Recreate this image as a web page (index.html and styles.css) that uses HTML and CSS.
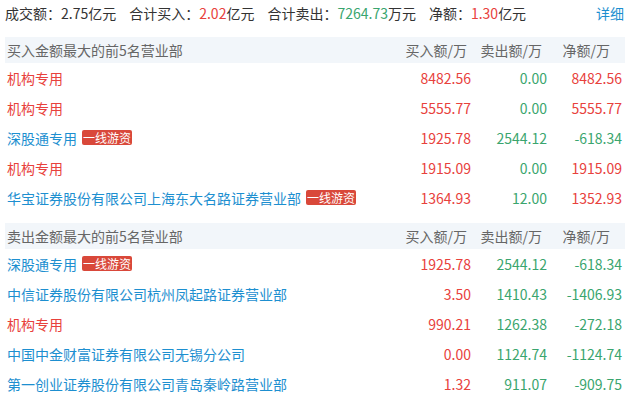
FILE: index.html
```html
<!DOCTYPE html>
<html lang="zh-CN">
<head>
    <meta charset="UTF-8">
    <title>龙虎榜营业部</title>
    <link rel="stylesheet" href="styles.css">
</head>
<body>
    <div class="panel">
        <div class="summary">
            <span class="item">成交额：2.75亿元</span>
            <span class="item">合计买入：<em class="up">2.02</em>亿元</span>
            <span class="item">合计卖出：<em class="down">7264.73</em>万元</span>
            <span class="item">净额：<em class="up">1.30</em>亿元</span>
            <a class="more" href="#">详细</a>
        </div>

        <div class="table">
            <div class="head">
                <span class="name">买入金额最大的前5名营业部</span>
                <span class="col c-buy">买入额/万</span>
                <span class="col c-sell">卖出额/万</span>
                <span class="col c-net">净额/万</span>
            </div>
            <div class="row">
                <span class="name org">机构专用</span>
                <span class="num up">8482.56</span>
                <span class="num down">0.00</span>
                <span class="num up">8482.56</span>
            </div>
            <div class="row">
                <span class="name org">机构专用</span>
                <span class="num up">5555.77</span>
                <span class="num down">0.00</span>
                <span class="num up">5555.77</span>
            </div>
            <div class="row">
                <span class="name"><a href="#">深股通专用</a><i class="tag">一线游资</i></span>
                <span class="num up">1925.78</span>
                <span class="num down">2544.12</span>
                <span class="num down">-618.34</span>
            </div>
            <div class="row">
                <span class="name org">机构专用</span>
                <span class="num up">1915.09</span>
                <span class="num down">0.00</span>
                <span class="num up">1915.09</span>
            </div>
            <div class="row">
                <span class="name"><a href="#">华宝证券股份有限公司上海东大名路证券营业部</a><i class="tag">一线游资</i></span>
                <span class="num up">1364.93</span>
                <span class="num down">12.00</span>
                <span class="num up">1352.93</span>
            </div>
        </div>

        <div class="table">
            <div class="head">
                <span class="name">卖出金额最大的前5名营业部</span>
                <span class="col c-buy">买入额/万</span>
                <span class="col c-sell">卖出额/万</span>
                <span class="col c-net">净额/万</span>
            </div>
            <div class="row">
                <span class="name"><a href="#">深股通专用</a><i class="tag">一线游资</i></span>
                <span class="num up">1925.78</span>
                <span class="num down">2544.12</span>
                <span class="num down">-618.34</span>
            </div>
            <div class="row">
                <span class="name"><a href="#">中信证券股份有限公司杭州凤起路证券营业部</a></span>
                <span class="num up">3.50</span>
                <span class="num down">1410.43</span>
                <span class="num down">-1406.93</span>
            </div>
            <div class="row">
                <span class="name org">机构专用</span>
                <span class="num up">990.21</span>
                <span class="num down">1262.38</span>
                <span class="num down">-272.18</span>
            </div>
            <div class="row">
                <span class="name"><a href="#">中国中金财富证券有限公司无锡分公司</a></span>
                <span class="num up">0.00</span>
                <span class="num down">1124.74</span>
                <span class="num down">-1124.74</span>
            </div>
            <div class="row">
                <span class="name"><a href="#">第一创业证券股份有限公司青岛秦岭路营业部</a></span>
                <span class="num up">1.32</span>
                <span class="num down">911.07</span>
                <span class="num down">-909.75</span>
            </div>
        </div>
    </div>
</body>
</html>
```

FILE: styles.css
```css
:root {
    --red: #e8413c;
    --green: #3aa56e;
    --blue: #1d8fd0;
    --text: #333333;
    --gray: #666666;
    --band: #f2f6fa;
}

body {
    margin: 0;
    font-family: "Microsoft YaHei", "Noto Sans CJK SC", sans-serif;
    font-size: 14px;
    color: var(--text);
    background: #ffffff;
}

.panel {
    width: 620px;
    padding: 0 9px 0 5px;
}

em {
    font-style: normal;
}

a {
    text-decoration: none;
    color: var(--blue);
}

.up {
    color: var(--red);
}

.down {
    color: var(--green);
}

/* 顶部汇总 */
.summary {
    display: flex;
    align-items: center;
    gap: 13px;
    height: 26px;
    line-height: 26px;
    margin-bottom: 11px;
    white-space: nowrap;
}

.summary .more {
    margin-left: auto;
    margin-right: 1px;
}

.table {
    margin-bottom: 10px;
}

.head,
.row {
    display: grid;
    grid-template-columns: 1fr 76px 76px 75px;
    padding: 0 3px 0 2px;
    white-space: nowrap;
}

.head {
    height: 26px;
    line-height: 26px;
    background: var(--band);
    color: var(--gray);
}

.head .col {
    text-align: right;
}

.head .c-buy {
    padding-right: 4px;
}

.head .c-sell {
    padding-right: 5px;
}

.head .c-net {
    padding-right: 12px;
}

.row {
    height: 30px;
    line-height: 30px;
}

.row .num {
    text-align: right;
}

.row .org {
    color: var(--red);
}

.tag {
    display: inline-block;
    margin-left: 5px;
    padding: 0 1px;
    height: 15px;
    line-height: 15px;
    font-size: 12px;
    font-style: normal;
    color: #ffffff;
    background: #d9483a;
    border-radius: 2px;
    vertical-align: 1px;
}
```
